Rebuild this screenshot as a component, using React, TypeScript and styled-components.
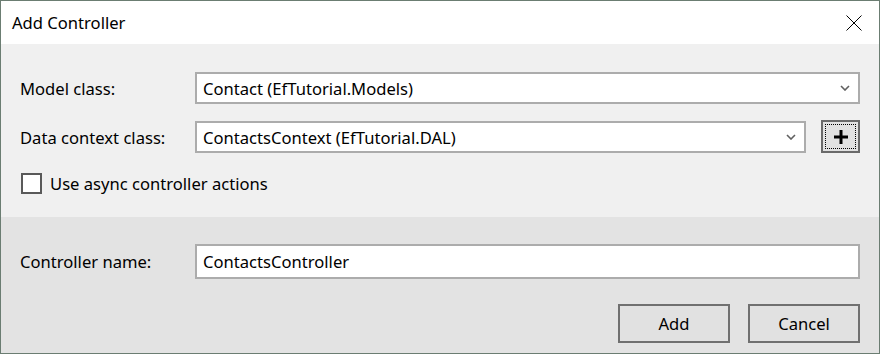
import styled, { createGlobalStyle } from 'styled-components';

const GlobalStyle = createGlobalStyle`
  html, body {
    margin: 0;
    padding: 0;
    background: #ffffff;
  }
  body {
    font-family: "Noto Sans", "Open Sans", sans-serif;
    font-size: 16.6px;
    color: #000;
  }
`;

const Window = styled.div`
  width: 880px;
  height: 354px;
  box-sizing: border-box;
  border: 1px solid #6b7d72;
  display: flex;
  flex-direction: column;
  background: #f0f0f0;
`;

const TitleBar = styled.div`
  height: 43px;
  background: #ffffff;
  display: flex;
  align-items: center;
  justify-content: space-between;
  padding: 0 17px 0 11px;
`;

const CloseButton = styled.button`
  width: 16px;
  height: 16px;
  padding: 0;
  border: none;
  background: transparent;
  display: flex;
`;

const TopSection = styled.section`
  height: 173px;
  box-sizing: border-box;
  padding: 28px 19px 0 19px;
  background: #f0f0f0;
  display: grid;
  grid-template-columns: 175px 1fr;
  grid-auto-rows: min-content;
  row-gap: 17px;
`;

const BottomSection = styled.section`
  flex: 1;
  padding: 27px 19px 0 19px;
  background: #e3e3e3;
  display: flex;
  flex-direction: column;
`;

const Label = styled.label`
  display: flex;
  align-items: center;
`;

const FieldRow = styled.div`
  display: flex;
  align-items: center;
  gap: 15px;
`;

const Combo = styled.div`
  box-sizing: border-box;
  height: 32px;
  flex: 1;
  border: 2px solid #acacac;
  background: #ffffff;
  display: flex;
  align-items: center;
  justify-content: space-between;
  padding: 0 8px 0 6px;
`;

const TextBox = styled.div`
  box-sizing: border-box;
  height: 35px;
  flex: 1;
  border: 2px solid #acacac;
  background: #ffffff;
  display: flex;
  align-items: center;
  padding: 0 6px;
`;

const PlusButton = styled.button`
  box-sizing: border-box;
  width: 39px;
  height: 33px;
  margin-top: -1px;
  padding: 0;
  border: 2px solid #6a6a6a;
  background: #e1e1e1;
  position: relative;
  display: flex;
  align-items: center;
  justify-content: center;

  &::after {
    content: '';
    position: absolute;
    inset: 2px;
    border: 1px dotted #000;
  }
`;

const CheckRow = styled.div`
  grid-column: 1 / span 2;
  display: flex;
  align-items: center;
  gap: 8px;
  margin-top: 2px;
`;

const CheckBox = styled.span`
  box-sizing: border-box;
  width: 21px;
  height: 21px;
  margin-left: 1px;
  border: 2px solid #595959;
  background: #ffffff;
`;

const NameRow = styled.div`
  display: grid;
  grid-template-columns: 175px 1fr;
`;

const ButtonRow = styled.div`
  margin-top: 25px;
  display: flex;
  justify-content: flex-end;
  gap: 18px;
`;

const DialogButton = styled.button`
  box-sizing: border-box;
  width: 112px;
  height: 39px;
  border: 2px solid #707070;
  background: #e1e1e1;
  font-family: inherit;
  font-size: inherit;
  color: #000;
`;

const Chevron = () => (
  <svg width="10" height="6" viewBox="0 0 10 6">
    <polyline points="1,1 5,5 9,1" fill="none" stroke="#606060" strokeWidth="1.6" />
  </svg>
);

export default function App() {
  return (
    <>
      <GlobalStyle />
      <Window>
        <TitleBar>
          <span>Add Controller</span>
          <CloseButton aria-label="Close">
            <svg width="16" height="16" viewBox="0 0 16 16">
              <path d="M0.5 0.5 L15.5 15.5 M15.5 0.5 L0.5 15.5" stroke="#000" strokeWidth="1" />
            </svg>
          </CloseButton>
        </TitleBar>
        <TopSection>
          <Label>Model class:</Label>
          <FieldRow>
            <Combo>
              <span>Contact (EfTutorial.Models)</span>
              <Chevron />
            </Combo>
          </FieldRow>
          <Label>Data context class:</Label>
          <FieldRow>
            <Combo>
              <span>ContactsContext (EfTutorial.DAL)</span>
              <Chevron />
            </Combo>
            <PlusButton aria-label="Add data context">
              <svg width="16" height="16" viewBox="0 0 16 16">
                <path d="M8 1 V15 M1 8 H15" stroke="#000" strokeWidth="3" />
              </svg>
            </PlusButton>
          </FieldRow>
          <CheckRow>
            <CheckBox />
            <span>Use async controller actions</span>
          </CheckRow>
        </TopSection>
        <BottomSection>
          <NameRow>
            <Label>Controller name:</Label>
            <TextBox>ContactsController</TextBox>
          </NameRow>
          <ButtonRow>
            <DialogButton>Add</DialogButton>
            <DialogButton>Cancel</DialogButton>
          </ButtonRow>
        </BottomSection>
      </Window>
    </>
  );
}
